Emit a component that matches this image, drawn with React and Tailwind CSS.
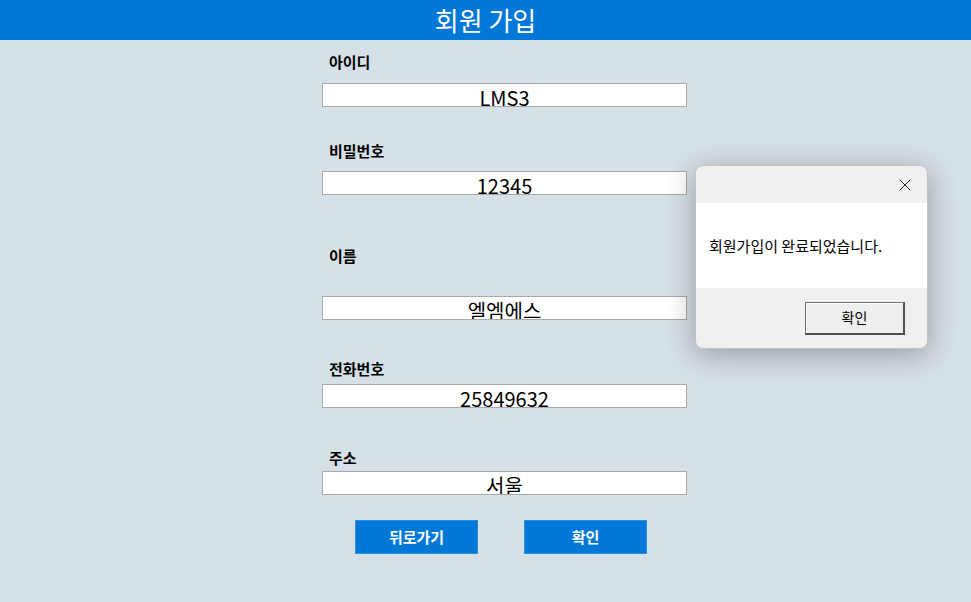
import React from 'react';
import { X } from 'lucide-react';

const font = { fontFamily: '"Noto Sans CJK KR", "Noto Sans", sans-serif' };

const fields = [
  { label: '아이디', value: 'LMS3', labelMt: 'mt-[12px]', inputMt: 'mt-[11px]' },
  { label: '비밀번호', value: '12345', labelMt: 'mt-[34px]', inputMt: 'mt-[10px]' },
  { label: '이름', value: '엘엠에스', labelMt: 'mt-[51px]', inputMt: 'mt-[30px]' },
  { label: '전화번호', value: '25849632', labelMt: 'mt-[39px]', inputMt: 'mt-[5px]' },
  { label: '주소', value: '서울', labelMt: 'mt-[40px]', inputMt: 'mt-[3px]' },
];

const Field = ({ label, value, labelMt, inputMt }) => (
  <div className="flex flex-col">
    <div className={`${labelMt} h-[20px] pl-[7px] text-[15px] font-bold leading-[20px] text-black`}>{label}</div>
    <div className={`${inputMt} h-[24px] w-[365px] overflow-hidden border border-[#a9a9a9] bg-white pt-[4px] text-center text-[20px] leading-none text-black`}>
      {value}
    </div>
  </div>
);

const App = () => {
  return (
    <div className="relative h-[602px] w-[971px] overflow-hidden bg-[#d6e0e7]" style={font}>
      <div className="flex h-[40px] items-center justify-center bg-[#0078d7] pb-[2px] text-[26px] text-white">
        회원 가입
      </div>

      <div className="flex flex-col pl-[322px]">
        {fields.map((f) => (
          <Field key={f.label} {...f} />
        ))}
        <div className="mt-[25px] flex gap-[46px] pl-[33px]">
          <button className="h-[34px] w-[123px] border border-[#2b8fe0] bg-[#0078d7] text-[15px] font-bold text-white">
            뒤로가기
          </button>
          <button className="h-[34px] w-[123px] border border-[#2b8fe0] bg-[#0078d7] text-[15px] font-bold text-white">
            확인
          </button>
        </div>
      </div>

      {/* message box */}
      <div className="absolute left-[695px] top-[165px] flex h-[184px] w-[233px] flex-col overflow-hidden rounded-[8px] border border-[#c4c4c4] bg-[#f0f0f0] shadow-[0_6px_30px_rgba(0,0,0,0.3)]">
        <div className="flex h-[37px] items-center justify-end pr-[12px]">
          <X size={20} strokeWidth={1.2} className="text-[#222]" />
        </div>
        <div className="flex h-[85px] items-center bg-white pl-[13px] pt-[1px] text-[15px] text-black">
          회원가입이 완료되었습니다.
        </div>
        <div className="flex flex-1 items-center justify-end pr-[22px]">
          <button className="h-[33px] w-[100px] border border-[#707070] border-b-[2px] border-r-[2px] border-b-[#505050] border-r-[#505050] bg-[#efefef] text-[14px] text-black shadow-[inset_1px_1px_0_#ffffff]">
            확인
          </button>
        </div>
      </div>
    </div>
  );
};

export default App;
